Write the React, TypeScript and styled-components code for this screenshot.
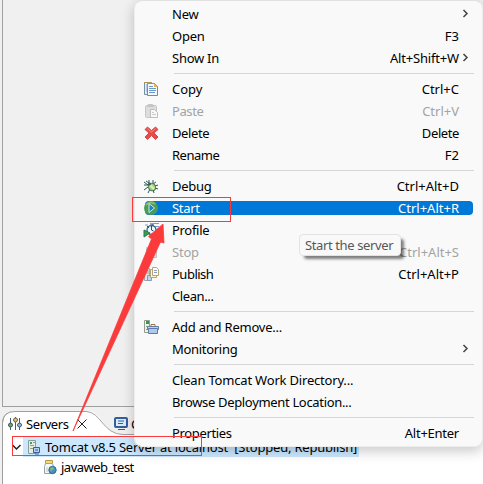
import React from "react";
import styled, { createGlobalStyle, css } from "styled-components";

const Global = createGlobalStyle`
  * { box-sizing: border-box; }
  html, body { margin: 0; background: #f0f0f0; overflow: hidden; }
  body { font: 13px/22px "Noto Sans", "Open Sans", sans-serif; color: #000; }
  svg { display: block; flex: none; }
`;

const Window = styled.main`
  position: relative;
  width: 483px;
  height: 484px;
  overflow: hidden;
  display: flex;
  flex-direction: column;
  padding-left: 2px;
  background: #f0f0f0;
`;

const Editor = styled.section`
  height: 407px;
  border: 1px solid #a0a0a0;
  border-width: 0 0 1px 1px;
`;

const View = styled.section`
  margin-top: 4px;
  height: 73px;
  border-left: 1px solid #a0a0a0;
  border-top-left-radius: 12px;
  background: #fff;
`;

const Tabs = styled.div`
  position: relative;
  height: 24px;
  padding-top: 2px;
  display: flex;
  align-items: center;
  margin-left: -1px;
`;

const TabShape = styled.svg`
  position: absolute;
  inset: 0;
`;

const Tab = styled.div`
  position: relative;
  display: flex;
  align-items: center;
  padding-left: 5px;
  width: 107px;
`;

const Caption = styled.span<{ $track?: number }>`
  white-space: pre;
  letter-spacing: ${(p) => p.$track ?? 0}px;
`;

const TabCaption = styled(Caption)`
  margin: 0 8px 0 3px;
  width: 43px;
`;

const Tree = styled.div`
  padding-top: 2px;
`;

const TreeRow = styled.div<{ $indent: number }>`
  display: flex;
  align-items: center;
  height: 20px;
  padding-left: ${(p) => p.$indent}px;
`;

const TreeLabel = styled.div<{ $selected?: boolean }>`
  display: flex;
  align-items: center;
  gap: 3px;
  height: 20px;
  padding: 0 1px 0 3px;
  ${(p) => p.$selected && css`width: 336px; background: #cce8ff;`}
`;

const Menu = styled.nav`
  position: absolute;
  left: 134px;
  top: 0;
  width: 349px;
  height: 447px;
  padding: 2px 9px 0 10px;
  border: 1px solid #ededed;
  border-top-color: #e2e2e2;
  border-radius: 8px;
  background: #f9f9f9;
  background-clip: padding-box;
  box-shadow: 0 4px 13px rgba(0, 0, 0, 0.22);
`;

const Item = styled.div<{ $selected?: boolean; $disabled?: boolean }>`
  position: relative;
  display: flex;
  align-items: center;
  height: 22px;
  padding: 0 14px 0 27px;
  color: ${(p) => (p.$selected ? "#fff" : p.$disabled ? "#a3a3a3" : "#000")};
  ${(p) =>
    p.$selected &&
    css`
      height: 14px;
      margin: 4px 0;
      border-radius: 4px;
      background: #0078d7;
    `}
`;

const IconSlot = styled.span`
  position: absolute;
  left: -2px;
  top: 50%;
  transform: translateY(-50%);
`;

const Shortcut = styled(Caption)`
  margin-left: auto;
`;

const Chevron = styled.svg`
  position: absolute;
  right: 4px;
  top: 6px;
`;

const Divider = styled.hr`
  height: 1px;
  margin: 4px -1px 4px 29px;
  border: 0;
  background: #d6d6d6;
`;

const Tooltip = styled.div`
  position: absolute;
  left: 299px;
  top: 234px;
  width: 102px;
  height: 22px;
  padding-left: 5px;
  line-height: 20px;
  border: 1px solid #e3e3e3;
  border-radius: 4px;
  background: #f9f9f9;
  color: #575757;
  box-shadow: 4px 4px 3px -1px rgba(0, 0, 0, 0.5);
`;

const Marker = styled.div<{ $x: number; $y: number; $w: number; $h: number }>`
  position: absolute;
  left: ${(p) => p.$x}px;
  top: ${(p) => p.$y}px;
  width: ${(p) => p.$w}px;
  height: ${(p) => p.$h}px;
  border: 1px solid #fb3b3b;
`;

const Arrow = styled.svg`
  position: absolute;
  inset: 0;
`;

const Icon = ({ children }: { children: React.ReactNode }) => (
  <svg width="16" height="16" viewBox="0 0 16 16" fill="none">{children}</svg>
);

const icons = {
  copy: (
    <Icon>
      <path d="M1.5 1.5h7v12h-7z" fill="#e3edf7" stroke="#7890a4" />
      <path d="M1 1.5h8" stroke="#ad9658" />
      <path d="M3 4h2M3 6h2M3 8h2M3 10h2" stroke="#86a9ce" />
      <path d="M4.500 2.500h7l3 3v9h-10z" fill="#f3f8fd" stroke="#75899a" />
      <path d="M4.500 7v-4.500h7l3 3" stroke="#aa945a" />
      <path d="M11 2.500v3.500h3.500z" fill="#ddb44e" />
      <path d="M6 5.500h4M6 7.500h7M6 9.500h7M6 11.500h6" stroke="#6f98c7" />
    </Icon>
  ),
  paste: (
    <Icon>
      <rect x="2.500" y="2.500" width="11" height="12" rx="1" fill="#ddd" stroke="#c8c8c8" />
      <path d="M4 4V2l2-1h3l2 1v2z" fill="#c5c5c5" />
      <path d="M7.500 6.500h4l3 3v5h-7z" fill="#f8f8f8" stroke="#bdbdbd" />
      <path d="M9 9.500h2M9 11.500h4" stroke="#ccc" />
    </Icon>
  ),
  remove: (
    <Icon>
      <path d="M4.500 2 8.500 5.500l4-3.500L15 4.500l-4 3.500 4 4-2.500 2.500-4-4-4 4L2 12l4-4-4-3.500z" fill="#e94b48" stroke="#d34a4c" strokeLinejoin="round" />
      <path d="m4.500 3.500 4 3.500 4-3.500" stroke="#f2918a" />
    </Icon>
  ),
  bug: (
    <Icon>
      <path d="M6 2v3L3 3M1 7h4M1 12l4-3M5 15l2-4M10 2v4l3-2M12 8l3-1M12 10l3 1M10 12l1 3M1 4l4 3" stroke="#285a54" />
      <ellipse cx="9" cy="9" rx="3.500" ry="4" transform="rotate(-35 9 9)" fill="#a9cf87" stroke="#3d714e" />
      <path d="m7 7 4 4" stroke="#e1efb0" strokeWidth="2" />
      <circle cx="6.500" cy="6" r="1.500" fill="#31604b" />
    </Icon>
  ),
  start: (
    <Icon>
      <circle cx="8" cy="8" r="7" fill="#4a9d56" />
      <path d="M3 5a6 6 0 0 1 9-1" stroke="#86bd76" strokeWidth="2" />
      <path d="M6 3.500v9L11.500 8z" fill="#1d7ccb" stroke="#d2ead9" />
    </Icon>
  ),
  profile: (
    <Icon>
      <path d="M10 1.500h6M12 4.500h4M13 7.500h3M2 3h3" stroke="#8199c4" />
      <circle cx="8.500" cy="8" r="4.500" fill="#edf6fc" stroke="#386787" strokeWidth="1.300" />
      <path d="M7 2h3v2M8.500 4v4l2 1M4 4l2 2" stroke="#294e77" />
      <path d="M1 8v7l6-4z" fill="#3c9c58" stroke="#27784b" />
    </Icon>
  ),
  stop: <Icon><path d="M3.500 3.500h10v10h-10z" fill="#dedede" stroke="#c0c0c0" /><path d="M6 6h5v5H6z" fill="#ccc" /></Icon>,
  publish: (
    <Icon>
      <path d="M1.500 2.500h5v12h-5zM3 5h3M3 7h3" fill="#dde5e5" stroke="#9aabb0" />
      <path d="M4.500 9.500h4v5h-4z" fill="#c6d3e9" stroke="#8798bd" />
      <path d="M7.500 3.500h6v8h-6z" fill="#fcf7dc" stroke="#b1a476" />
      <path d="M9.500 1.500h4l2 2v6h-6z" fill="#fffdf0" stroke="#b5a575" />
      <path d="M11 4.500h3M11 6.500h3" stroke="#899cc5" />
    </Icon>
  ),
  modules: (
    <Icon>
      <path d="M1.500 1.500h5v12h-5z" fill="#edf1e8" stroke="#929d8d" />
      <path d="M3 2h3v3H3z" fill="#35985b" />
      <path d="M3 7.500h3M3 10.500h2" stroke="#8b9f8d" />
      <path d="M8 7V5.500h4V8" stroke="#9c7b49" />
      <path d="M4.500 7.500h11v3h-11z" fill="#bdd1eb" stroke="#647ba3" />
      <path d="M5.500 9.500h9v5h-9z" fill="#adc9ee" stroke="#607ba8" />
    </Icon>
  ),
  server: (
    <Icon>
      <path d="M2.500 1.500h7v13h-7z" fill="#e4ece5" stroke="#8d9e90" />
      <path d="M4 4h2" stroke="#35a462" strokeWidth="2" />
      <path d="M4 6.500h4M4 9.500h3M7 3.500h2" stroke="#8ca090" />
      <path d="M7.500 8.500h6v5h-6z" fill="#b8d1ef" stroke="#365f9a" />
      <path d="M9 11h3M9 15h4" stroke="#365f9a" />
    </Icon>
  ),
  project: (
    <Icon>
      <path d="M3.500 1.500h7v3h-7z" fill="#f7d676" stroke="#bc9b48" />
      <path d="M3.500 4.500h7l1 3v7h-9v-7z" fill="#f4f7fa" stroke="#92a4b7" />
      <path d="M4 8h2v5H4z" fill="#e4e1c0" />
      <circle cx="10.500" cy="11" r="3.700" fill="#478fc0" stroke="#326b91" />
      <path d="m8 9 3-1 1 2-2 1-1 2z" fill="#86bd68" />
    </Icon>
  ),
  servers: (
    <Icon>
      <path d="M3.500 2v12M8.500 1v13M12.500 2v12" stroke="#415d79" />
      <circle cx="3.500" cy="9" r="2" fill="#70a65f" stroke="#40546c" />
      <circle cx="8.500" cy="4" r="2" fill="#e4bd58" stroke="#68624b" />
      <circle cx="12.500" cy="9" r="2" fill="#96b7d5" stroke="#3e5875" />
    </Icon>
  ),
};

type Entry = {
  label: string;
  track?: number;
  keys?: string;
  keyTrack?: number;
  icon?: keyof typeof icons;
  disabled?: boolean;
  selected?: boolean;
  submenu?: boolean;
};

const groups: Entry[][] = [
  [
    { label: "New", track: -0.2, submenu: true },
    { label: "Open", track: -0.25, keys: "F3" },
    { label: "Show In", track: -0.25, keys: "Alt+Shift+W", keyTrack: -0.18, submenu: true },
  ],
  [
    { label: "Copy", keys: "Ctrl+C", icon: "copy" },
    { label: "Paste", track: -0.4, keys: "Ctrl+V", icon: "paste", disabled: true },
    { label: "Delete", track: -0.4, keys: "Delete", keyTrack: -0.4, icon: "remove" },
    { label: "Rename", track: -0.5, keys: "F2" },
  ],
  [
    { label: "Debug", track: -0.3, keys: "Ctrl+Alt+D", icon: "bug" },
    { label: "Start", track: -0.3, keys: "Ctrl+Alt+R", icon: "start", selected: true },
    { label: "Profile", track: -0.3, icon: "profile" },
    { label: "Stop", track: -0.2, keys: "Ctrl+Alt+S", icon: "stop", disabled: true },
    { label: "Publish", track: -0.5, keys: "Ctrl+Alt+P", icon: "publish" },
    { label: "Clean...", track: -0.4 },
  ],
  [
    { label: "Add and Remove...", track: -0.23, icon: "modules" },
    { label: "Monitoring", track: -0.3, submenu: true },
  ],
  [
    { label: "Clean Tomcat Work Directory...", track: -0.19 },
    { label: "Browse Deployment Location...", track: -0.33 },
  ],
  [{ label: "Properties", track: -0.35, keys: "Alt+Enter", keyTrack: -0.25 }],
];

export default function App() {
  return (
    <>
      <Global />
      <Window>
        <Editor />
        <View>
          <Tabs>
            <TabShape width="481" height="24">
              <path d="M87 0C99 0 102 23 121 23.500H481V0Z" fill="#f0f0f0" />
              <path d="M.5 24V12Q1 .5 13 .5H84C99 .5 101 23.500 121 23.500H481" fill="none" stroke="#a0a0a0" />
            </TabShape>
            <Tab>
              {icons.servers}
              <TabCaption $track={-0.4}>Servers</TabCaption>
              <svg width="10" height="10" viewBox="0 0 10 10"><path d="m.5.5 9 9M9.500.5l-9 9" stroke="#222" /></svg>
            </Tab>
            <Tab>
              <svg width="14" height="14" viewBox="0 0 14 14"><rect x="1" y="1" width="12" height="9" rx="1" fill="#d8eafb" stroke="#315f9c" strokeWidth="2" /><path d="M4 4h6M4 6.500h5M4 12.500h7" stroke="#315f9c" /></svg>
              <TabCaption>Console</TabCaption>
            </Tab>
          </Tabs>
          <Tree>
            <TreeRow $indent={8}>
              <svg width="12" height="12" viewBox="0 0 12 12"><path d="m1.500 4 4 4 4-4" fill="none" stroke="#222" strokeWidth="1.500" /></svg>
              <TreeLabel $selected>
                {icons.server}
                <Caption $track={-0.2}>Tomcat v8.5 Server at localhost  [Stopped, Republish]</Caption>
              </TreeLabel>
            </TreeRow>
            <TreeRow $indent={36}>
              <TreeLabel>
                {icons.project}
                <Caption $track={-0.5}>javaweb_test</Caption>
              </TreeLabel>
            </TreeRow>
          </Tree>
        </View>
        <Menu>
          {groups.map((group, i) => (
            <React.Fragment key={i}>
              {i > 0 && <Divider />}
              {group.map((e) => (
                <Item key={e.label} $selected={e.selected} $disabled={e.disabled}>
                  {e.icon && <IconSlot>{icons[e.icon]}</IconSlot>}
                  <Caption $track={e.track}>{e.label}</Caption>
                  {e.keys && <Shortcut $track={e.keyTrack}>{e.keys}</Shortcut>}
                  {e.submenu && (
                    <Chevron width="7" height="9" viewBox="0 0 7 9"><path d="m1.500 1 3.500 3.500L1.500 8" fill="none" stroke="#444" strokeWidth="1.500" /></Chevron>
                  )}
                </Item>
              ))}
            </React.Fragment>
          ))}
        </Menu>
        <Tooltip><Caption $track={-0.38}>Start the server</Caption></Tooltip>
        <Marker $x={132} $y={197} $w={99} $h={25} />
        <Marker $x={12} $y={436} $w={190} $h={20} />
        <Arrow width="483" height="484" viewBox="0 0 483 484">
          <path d="M73 431 151.500 239 148.500 236.500 163 224 164 243 160.500 242Z" fill="#fb3b3b" stroke="#fb3b3b" strokeWidth=".8" />
        </Arrow>
      </Window>
    </>
  );
}
